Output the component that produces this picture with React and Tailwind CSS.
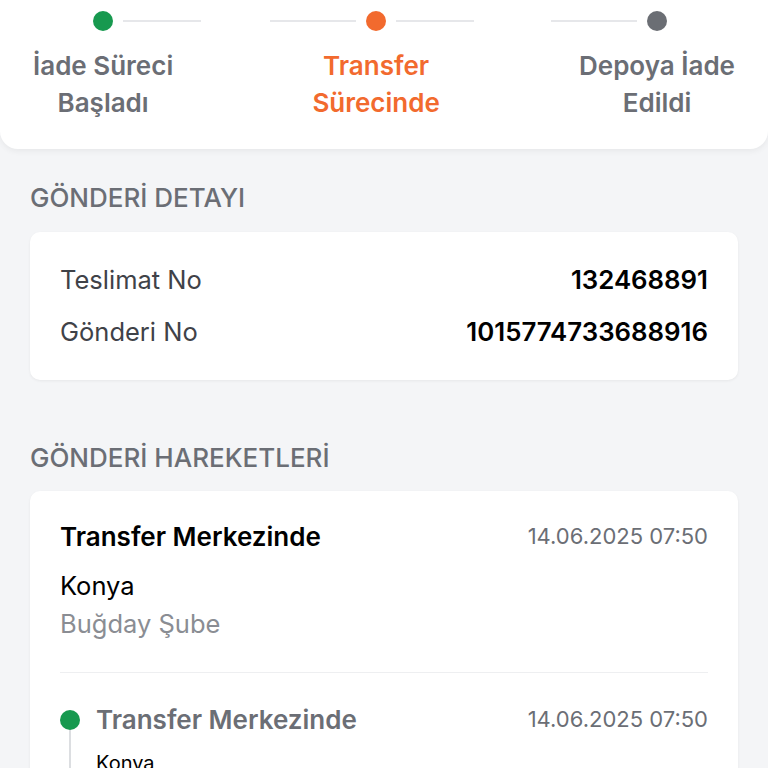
import React from 'react';

const steps = [
  { lines: ['İade Süreci', 'Başladı'], dot: 'bg-[#17994f]', text: 'text-[#6b6e75]', left: false, right: true },
  { lines: ['Transfer', 'Sürecinde'], dot: 'bg-[#f26a2e]', text: 'text-[#f26a2e]', left: true, right: true },
  { lines: ['Depoya İade', 'Edildi'], dot: 'bg-[#6b6e74]', text: 'text-[#6b6e75]', left: true, right: false },
];

const Step = ({ step }) => (
  <div className="relative flex flex-col items-center">
    <div className="relative w-[20px] h-[20px]">
      <div className={`w-[20px] h-[20px] rounded-full ${step.dot}`} />
      {step.left && <div className="absolute right-[30px] top-[9px] w-[86px] h-[2px] bg-[#e6e7ea]" />}
      {step.right && <div className="absolute left-[30px] top-[9px] w-[78px] h-[2px] bg-[#e6e7ea]" />}
    </div>
    <div className={`mt-[16px] text-center text-[26px] leading-[37px] font-semibold ${step.text}`}>
      {step.lines.map((l) => (
        <div key={l}>{l}</div>
      ))}
    </div>
  </div>
);

const InfoRow = ({ label, value }) => (
  <div className="flex items-center justify-between h-[36px]">
    <span className="text-[25.5px] text-[#3f4248]">{label}</span>
    <span className="text-[25.8px] font-semibold text-black">{value}</span>
  </div>
);

export default function App() {
  return (
    <div className="h-[768px] bg-[#f4f5f7] overflow-hidden" style={{ fontFamily: 'Inter, "Noto Sans", sans-serif' }}>
      {/* stepper */}
      <div className="bg-white rounded-b-[18px] shadow-[0_2px_6px_rgba(0,0,0,0.06)] pt-[11px] pb-[28px] px-[33px] flex justify-between">
        {steps.map((s, i) => (
          <Step key={i} step={s} />
        ))}
      </div>

      <div className="px-[30px]">
        <h2 className="mt-[33px] text-[26px] leading-[32px] font-medium text-[#6b6e75]">GÖNDERİ DETAYI</h2>
        <div className="mt-[18px] bg-white rounded-[10px] shadow-[0_1px_3px_rgba(0,0,0,0.06)] px-[30px] pt-[30px] pb-[30px] flex flex-col gap-[16px]">
          <InfoRow label="Teslimat No" value="132468891" />
          <InfoRow label="Gönderi No" value="1015774733688916" />
        </div>

        <h2 className="mt-[62px] text-[26px] leading-[32px] font-medium text-[#6b6e75]">GÖNDERİ HAREKETLERİ</h2>
        <div className="mt-[17px] bg-white rounded-t-[10px] shadow-[0_1px_3px_rgba(0,0,0,0.06)] px-[30px] pt-[27px] pb-[40px]">
          <div className="flex items-center justify-between h-[36px]">
            <span className="text-[26px] font-semibold text-black">Transfer Merkezinde</span>
            <span className="text-[22px] text-[#6b6e75]">14.06.2025 07:50</span>
          </div>
          <div className="mt-[14px] text-[25.5px] leading-[36px] text-black">Konya</div>
          <div className="mt-[2px] text-[25.5px] leading-[36px] text-[#8a8d93]">Buğday Şube</div>
          <div className="mt-[30px] h-[1px] bg-[#eeeff1]" />

          <div className="mt-[28px] flex gap-[16px]">
            <div className="w-[20px] flex flex-col items-center pt-[9px]">
              <div className="w-[20px] h-[20px] rounded-full bg-[#17994f] shrink-0" />
              <div className="w-[2px] h-[60px] bg-[#dcdee1]" />
            </div>
            <div className="flex-1">
              <div className="flex items-center justify-between h-[36px]">
                <span className="text-[26px] font-semibold text-[#6b6e75]">Transfer Merkezinde</span>
                <span className="text-[22px] text-[#6b6e75]">14.06.2025 07:50</span>
              </div>
              <div className="mt-[12px] text-[20px] leading-[28px] text-black">Konya</div>
            </div>
          </div>
        </div>
      </div>
    </div>
  );
}
